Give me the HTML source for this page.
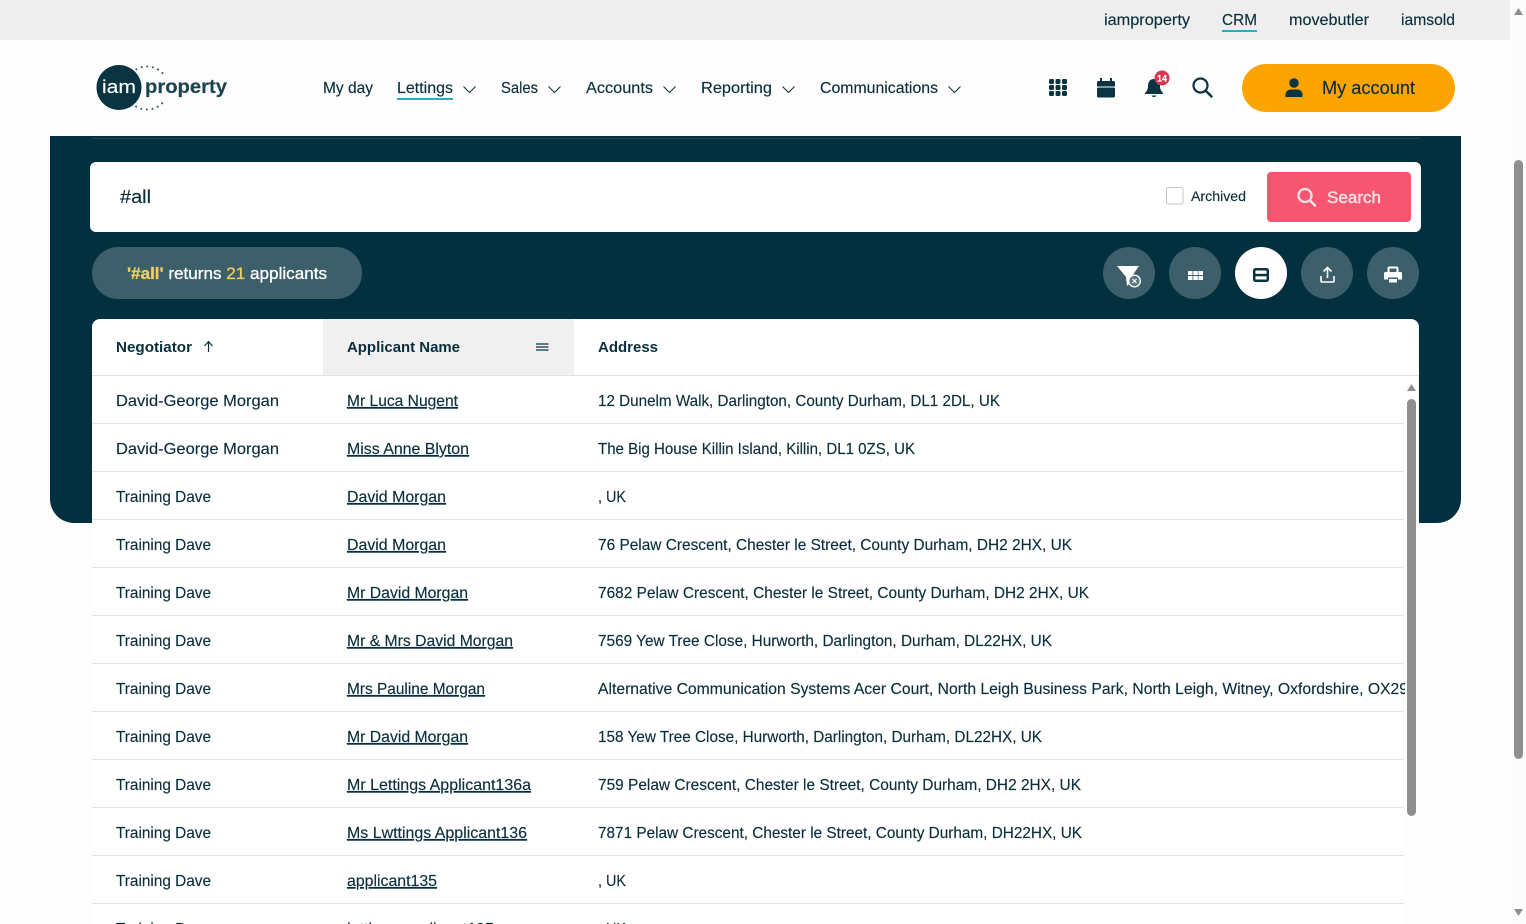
<!DOCTYPE html>
<html lang="en">
<head>
<meta charset="utf-8">
<title>iam property CRM</title>
<style>
html,body{margin:0;padding:0;width:1526px;height:924px;overflow:hidden;background:#fdfdfd}
svg{display:block}
text{font-family:"Liberation Sans",sans-serif;fill:#0a2e3b;font-size:16px;stroke:#0a2e3b;stroke-width:.15px}
.c{font-size:16px}
.l{text-decoration:underline}
.b{font-weight:bold;font-size:15px;stroke-width:0}
</style>
</head>
<body>
<svg width="1526" height="924" viewBox="0 0 1526 924" xmlns="http://www.w3.org/2000/svg">
<defs><clipPath id="rc"><rect x="92" y="376" width="1313" height="548"/></clipPath></defs>
<rect width="1526" height="924" fill="#fdfdfd"/>
<!-- top bar -->
<rect width="1510" height="40" fill="#eeeeee"/>
<text x="1104" y="25" textLength="86" lengthAdjust="spacingAndGlyphs">iamproperty</text>
<text x="1222" y="25" textLength="35" lengthAdjust="spacingAndGlyphs">CRM</text>
<rect x="1222" y="30" width="35" height="2" fill="#2fa9c4"/>
<text x="1289" y="25" textLength="80" lengthAdjust="spacingAndGlyphs">movebutler</text>
<text x="1401" y="25" textLength="54" lengthAdjust="spacingAndGlyphs">iamsold</text>
<!-- page scrollbar -->
<rect x="1510" y="0" width="16" height="924" fill="#fcfcfc"/>
<path d="M1518.500 8l4.500 7h-9z" fill="#8f8f8f"/>
<rect x="1514" y="160" width="9" height="599" rx="4.500" fill="#8f8f8f"/>
<path d="M1518.500 916l-4.500-7h9z" fill="#8f8f8f"/>
<!-- logo -->
<circle cx="147" cy="88" r="21.500" fill="none" stroke="#3f5c66" stroke-width="2" stroke-dasharray="0.100 5.530" stroke-linecap="round"/>
<rect x="142" y="76" width="30" height="24" fill="#fdfdfd"/>
<circle cx="119" cy="87.500" r="22.500" fill="#0a3442"/>
<text x="102" y="93" textLength="34" lengthAdjust="spacingAndGlyphs" style="fill:#fff;stroke:#fff;font-size:18px">iam</text>
<text x="145" y="93" textLength="82" lengthAdjust="spacingAndGlyphs" style="font-size:19px;font-weight:bold;fill:#1b4350;stroke:#1b4350">property</text>
<!-- nav -->
<text x="323" y="93" textLength="50" lengthAdjust="spacingAndGlyphs">My day</text>
<text x="397" y="93" textLength="56" lengthAdjust="spacingAndGlyphs">Lettings</text>
<rect x="397" y="98" width="56" height="2" fill="#2fa9c4"/>
<path d="M463.500 86.500l6 6 6-6" fill="none" stroke="#0a2e3b" stroke-width="1"/>
<text x="501" y="93" textLength="37" lengthAdjust="spacingAndGlyphs">Sales</text>
<path d="M548.500 86.500l6 6 6-6" fill="none" stroke="#0a2e3b" stroke-width="1"/>
<text x="586" y="93" textLength="67" lengthAdjust="spacingAndGlyphs">Accounts</text>
<path d="M663.500 86.500l6 6 6-6" fill="none" stroke="#0a2e3b" stroke-width="1"/>
<text x="701" y="93" textLength="71" lengthAdjust="spacingAndGlyphs">Reporting</text>
<path d="M782.500 86.500l6 6 6-6" fill="none" stroke="#0a2e3b" stroke-width="1"/>
<text x="820" y="93" textLength="118" lengthAdjust="spacingAndGlyphs">Communications</text>
<path d="M948.500 86.500l6 6 6-6" fill="none" stroke="#0a2e3b" stroke-width="1"/>
<!-- nav icons: grid -->
<g fill="#0a3442">
<rect x="1049" y="79" width="5" height="5" rx="1.200"/><rect x="1055.500" y="79" width="5" height="5" rx="1.200"/><rect x="1062" y="79" width="5" height="5" rx="1.200"/>
<rect x="1049" y="85" width="5" height="5" rx="1.200"/><rect x="1055.500" y="85" width="5" height="5" rx="1.200"/><rect x="1062" y="85" width="5" height="5" rx="1.200"/>
<rect x="1049" y="91" width="5" height="5" rx="1.200"/><rect x="1055.500" y="91" width="5" height="5" rx="1.200"/><rect x="1062" y="91" width="5" height="5" rx="1.200"/>
<!-- calendar -->
<path d="M1098.500 81h15a1.500 1.500 0 0 1 1.500 1.500v4h-18v-4a1.500 1.500 0 0 1 1.500-1.500z"/>
<rect x="1097" y="87.500" width="18" height="10" rx="1.500"/>
<rect x="1100" y="78" width="2" height="4"/><rect x="1110" y="78" width="2" height="4"/>
<!-- bell -->
<path d="M1154 79c-4 0-6 3-6 7 0 3-1 5-3 7v1h18v-1c-2-2-3-4-3-7 0-4-2-7-6-7z"/>
<path d="M1151.500 95.500h5c-.5 2-4.500 2-5 0z"/>
</g>
<circle cx="1162" cy="78" r="7.500" fill="#d9344f"/>
<text x="1157" y="81.500" textLength="10" lengthAdjust="spacingAndGlyphs" style="fill:#fff;stroke:#fff;font-size:9px;font-weight:bold">14</text>
<!-- search icon -->
<circle cx="1200.500" cy="85.500" r="7" fill="none" stroke="#0a3442" stroke-width="2.200"/>
<path d="M1205.500 90.500l6 6" stroke="#0a3442" stroke-width="2.400" stroke-linecap="round"/>
<!-- account -->
<rect x="1242" y="64" width="213" height="48" rx="24" fill="#fca400"/>
<circle cx="1294" cy="83" r="4.700" fill="#0a3442"/>
<path d="M1285.500 97v-2.500c0-3 3-5 5-5h7c2.500 0 5 2 5 5v2.500z" fill="#0a3442"/>
<text x="1322" y="94" textLength="93" lengthAdjust="spacingAndGlyphs" style="font-size:18px">My account</text>
<!-- panel -->
<path d="M50 136H1461V499a24 24 0 0 1-24 24H74a24 24 0 0 1-24-24z" fill="#03303f"/>
<rect x="92" y="138" width="1328" height="1" fill="#1c4856"/>
<!-- search box -->
<rect x="90" y="162" width="1331" height="70" rx="6" fill="#fff"/>
<text x="120" y="203" textLength="31" lengthAdjust="spacingAndGlyphs" style="font-size:18px">#all</text>
<rect x="1166.500" y="187.500" width="16.500" height="16.500" rx="2" fill="#fff" stroke="#c4c4c4"/>
<text x="1191" y="201" textLength="55" lengthAdjust="spacingAndGlyphs" style="font-size:14px">Archived</text>
<rect x="1267" y="172" width="144" height="50" rx="4" fill="#f6566f"/>
<circle cx="1305" cy="195.500" r="6.500" fill="none" stroke="#fde3e7" stroke-width="2.300"/>
<path d="M1310 200.500l5 5" stroke="#fde3e7" stroke-width="2.500" stroke-linecap="round"/>
<text x="1327" y="203" textLength="54" lengthAdjust="spacingAndGlyphs" style="font-size:17px;fill:#fde3e7;stroke:#fde3e7;stroke-width:.4px">Search</text>
<!-- result pill -->
<rect x="92" y="247" width="270" height="52" rx="26" fill="#3c5f6a"/>
<text x="127" y="279" textLength="200" lengthAdjust="spacingAndGlyphs" style="font-size:17px;fill:#fff;stroke:#fff;stroke-width:.3px"><tspan style="fill:#f0cf60;stroke:#f0cf60;font-weight:bold">'#all'</tspan> returns <tspan style="fill:#f0cf60;stroke:#f0cf60">21</tspan> applicants</text>
<!-- round buttons -->
<circle cx="1129" cy="273" r="26" fill="#3c5f6a"/>
<circle cx="1195" cy="273" r="26" fill="#3c5f6a"/>
<circle cx="1261" cy="273" r="26" fill="#fff"/>
<circle cx="1327" cy="273" r="26" fill="#3c5f6a"/>
<circle cx="1393" cy="273" r="26" fill="#3c5f6a"/>
<!-- filter -->
<path d="M1117 266H1139L1132 276V282L1127 286L1126 277Z" fill="#fff"/>
<circle cx="1134.500" cy="281" r="6.500" fill="#fff"/>
<circle cx="1134.500" cy="281" r="5.200" fill="#5b7781"/>
<path d="M1132.500 279l4 4M1136.500 279l-4 4" stroke="#fff" stroke-width="1.200"/>
<!-- grid -->
<g fill="#fff">
<rect x="1188" y="271" width="4.500" height="4"/><rect x="1193.300" y="271" width="4.500" height="4"/><rect x="1198.500" y="271" width="4.500" height="4"/>
<rect x="1188" y="276" width="4.500" height="4"/><rect x="1193.300" y="276" width="4.500" height="4"/><rect x="1198.500" y="276" width="4.500" height="4"/>
</g>
<!-- rows view -->
<rect x="1254.200" y="269.200" width="13.600" height="11.600" rx="1.500" fill="none" stroke="#0a3442" stroke-width="2.500"/>
<rect x="1254" y="273.800" width="14" height="2.500" fill="#0a3442"/>
<!-- export -->
<path d="M1327.500 278v-10M1323.500 271.500l4-4 4 4" fill="none" stroke="#fff" stroke-width="1.600"/>
<path d="M1321 276v5a1 1 0 0 0 1 1h11a1 1 0 0 0 1-1v-5" fill="none" stroke="#fff" stroke-width="1.600"/>
<!-- print -->
<path d="M1388.500 273v-4.500a1 1 0 0 1 1-1h7a1 1 0 0 1 1 1v4.500" fill="none" stroke="#fff" stroke-width="2"/>
<path d="M1385.500 272h15a1.500 1.500 0 0 1 1.500 1.500v6h-4v-2h-10v2h-4v-6a1.500 1.500 0 0 1 1.500-1.500z" fill="#fff"/>
<rect x="1389" y="279" width="8" height="3.500" fill="#fff"/>
<!-- table -->
<path d="M92 924V327a8 8 0 0 1 8-8H1411a8 8 0 0 1 8 8V523H1404V924z" fill="#fff"/>
<rect x="323" y="319" width="251" height="56" fill="#f0f0f0"/>
<rect x="92" y="375" width="1327" height="1" fill="#e2e2e2"/>
<text class="b" x="116" y="352" textLength="76" lengthAdjust="spacingAndGlyphs">Negotiator</text>
<path d="M208.500 352v-10M204.500 346l4-4.500 4 4.500" fill="none" stroke="#0a2e3b" stroke-width="1.200"/>
<text class="b" x="347" y="352" textLength="113" lengthAdjust="spacingAndGlyphs">Applicant Name</text>
<path d="M536 344h12.500M536 347h12.500M536 350h12.500" stroke="#0a3442" stroke-width="1.200"/>
<text class="b" x="598" y="352" textLength="60" lengthAdjust="spacingAndGlyphs">Address</text>
<!-- row lines -->
<g fill="#e4e4e4">
<rect x="92" y="423" width="1312" height="1"/><rect x="92" y="471" width="1312" height="1"/><rect x="92" y="519" width="1312" height="1"/><rect x="92" y="567" width="1312" height="1"/><rect x="92" y="615" width="1312" height="1"/><rect x="92" y="663" width="1312" height="1"/><rect x="92" y="711" width="1312" height="1"/><rect x="92" y="759" width="1312" height="1"/><rect x="92" y="807" width="1312" height="1"/><rect x="92" y="855" width="1312" height="1"/><rect x="92" y="903" width="1312" height="1"/>
</g>
<g clip-path="url(#rc)">
<text class="c" x="116" y="406" textLength="163" lengthAdjust="spacingAndGlyphs">David-George Morgan</text>
<text class="c l" x="347" y="406" textLength="111" lengthAdjust="spacingAndGlyphs">Mr Luca Nugent</text>
<text class="c" x="598" y="406" textLength="402" lengthAdjust="spacingAndGlyphs">12 Dunelm Walk, Darlington, County Durham, DL1 2DL, UK</text>

<text class="c" x="116" y="454" textLength="163" lengthAdjust="spacingAndGlyphs">David-George Morgan</text>
<text class="c l" x="347" y="454" textLength="122" lengthAdjust="spacingAndGlyphs">Miss Anne Blyton</text>
<text class="c" x="598" y="454" textLength="317" lengthAdjust="spacingAndGlyphs">The Big House Killin Island, Killin, DL1 0ZS, UK</text>

<text class="c" x="116" y="502" textLength="95" lengthAdjust="spacingAndGlyphs">Training Dave</text>
<text class="c l" x="347" y="502" textLength="99" lengthAdjust="spacingAndGlyphs">David Morgan</text>
<text class="c" x="598" y="502" textLength="28" lengthAdjust="spacingAndGlyphs">, UK</text>

<text class="c" x="116" y="550" textLength="95" lengthAdjust="spacingAndGlyphs">Training Dave</text>
<text class="c l" x="347" y="550" textLength="99" lengthAdjust="spacingAndGlyphs">David Morgan</text>
<text class="c" x="598" y="550" textLength="474" lengthAdjust="spacingAndGlyphs">76 Pelaw Crescent, Chester le Street, County Durham, DH2 2HX, UK</text>

<text class="c" x="116" y="598" textLength="95" lengthAdjust="spacingAndGlyphs">Training Dave</text>
<text class="c l" x="347" y="598" textLength="121" lengthAdjust="spacingAndGlyphs">Mr David Morgan</text>
<text class="c" x="598" y="598" textLength="491" lengthAdjust="spacingAndGlyphs">7682 Pelaw Crescent, Chester le Street, County Durham, DH2 2HX, UK</text>

<text class="c" x="116" y="646" textLength="95" lengthAdjust="spacingAndGlyphs">Training Dave</text>
<text class="c l" x="347" y="646" textLength="166" lengthAdjust="spacingAndGlyphs">Mr &amp; Mrs David Morgan</text>
<text class="c" x="598" y="646" textLength="454" lengthAdjust="spacingAndGlyphs">7569 Yew Tree Close, Hurworth, Darlington, Durham, DL22HX, UK</text>

<text class="c" x="116" y="694" textLength="95" lengthAdjust="spacingAndGlyphs">Training Dave</text>
<text class="c l" x="347" y="694" textLength="138" lengthAdjust="spacingAndGlyphs">Mrs Pauline Morgan</text>
<text class="c" x="598" y="694" textLength="810" lengthAdjust="spacingAndGlyphs">Alternative Communication Systems Acer Court, North Leigh Business Park, North Leigh, Witney, Oxfordshire, OX29</text>

<text class="c" x="116" y="742" textLength="95" lengthAdjust="spacingAndGlyphs">Training Dave</text>
<text class="c l" x="347" y="742" textLength="121" lengthAdjust="spacingAndGlyphs">Mr David Morgan</text>
<text class="c" x="598" y="742" textLength="444" lengthAdjust="spacingAndGlyphs">158 Yew Tree Close, Hurworth, Darlington, Durham, DL22HX, UK</text>

<text class="c" x="116" y="790" textLength="95" lengthAdjust="spacingAndGlyphs">Training Dave</text>
<text class="c l" x="347" y="790" textLength="184" lengthAdjust="spacingAndGlyphs">Mr Lettings Applicant136a</text>
<text class="c" x="598" y="790" textLength="483" lengthAdjust="spacingAndGlyphs">759 Pelaw Crescent, Chester le Street, County Durham, DH2 2HX, UK</text>

<text class="c" x="116" y="838" textLength="95" lengthAdjust="spacingAndGlyphs">Training Dave</text>
<text class="c l" x="347" y="838" textLength="180" lengthAdjust="spacingAndGlyphs">Ms Lwttings Applicant136</text>
<text class="c" x="598" y="838" textLength="484" lengthAdjust="spacingAndGlyphs">7871 Pelaw Crescent, Chester le Street, County Durham, DH22HX, UK</text>

<text class="c" x="116" y="886" textLength="95" lengthAdjust="spacingAndGlyphs">Training Dave</text>
<text class="c l" x="347" y="886" textLength="90" lengthAdjust="spacingAndGlyphs">applicant135</text>
<text class="c" x="598" y="886" textLength="28" lengthAdjust="spacingAndGlyphs">, UK</text>

<text class="c" x="116" y="934" textLength="95" lengthAdjust="spacingAndGlyphs">Training Dave</text>
<text class="c l" x="347" y="934" textLength="147" lengthAdjust="spacingAndGlyphs">lettings applicant135</text>
<text class="c" x="598" y="934" textLength="28" lengthAdjust="spacingAndGlyphs">, UK</text>
</g>
<!-- inner scrollbar -->
<path d="M1411.500 384l4.500 7h-9z" fill="#8f8f8f"/>
<rect x="1407" y="399" width="9" height="417" rx="4.500" fill="#8f8f8f"/>
</svg>
</body>
</html>
